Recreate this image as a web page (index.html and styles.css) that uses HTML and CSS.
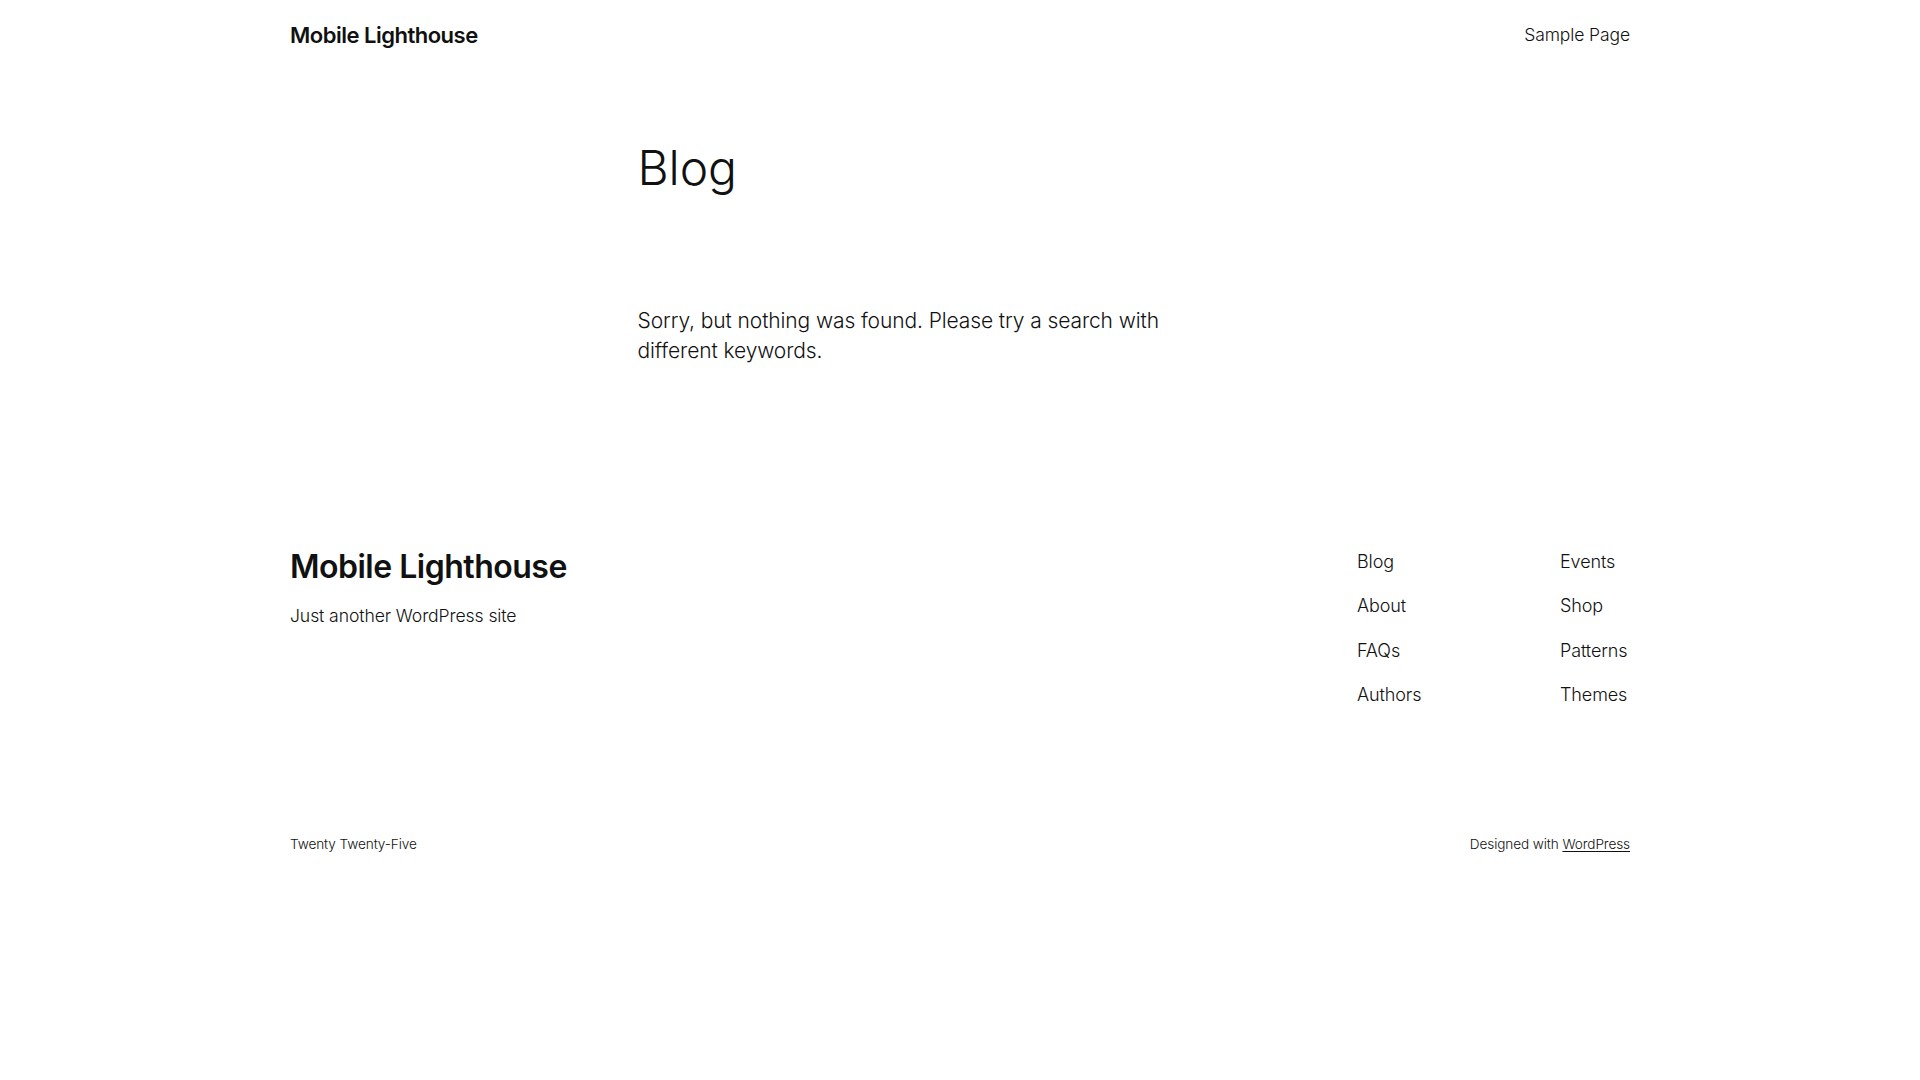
FILE: index.html
```html
<!DOCTYPE html>
<html lang="en">
<head>
<meta charset="utf-8">
<title>Blog – Mobile Lighthouse</title>
<link rel="stylesheet" href="styles.css">
</head>
<body>
<header class="site-header">
  <div class="wide header-row">
    <a class="site-title" href="#">Mobile Lighthouse</a>
    <nav class="header-nav"><a href="#">Sample Page</a></nav>
  </div>
</header>
<main class="main">
  <div class="content">
    <h1 class="page-title">Blog</h1>
    <p class="no-results">Sorry, but nothing was found. Please try a search with different keywords.</p>
  </div>
</main>
<footer class="site-footer">
  <div class="wide footer-top">
    <div class="footer-brand">
      <h2 class="footer-title"><a href="#">Mobile Lighthouse</a></h2>
      <p class="tagline">Just another WordPress site</p>
    </div>
    <div class="footer-navs">
      <nav class="footer-nav">
        <a href="#">Blog</a>
        <a href="#">About</a>
        <a href="#">FAQs</a>
        <a href="#">Authors</a>
      </nav>
      <nav class="footer-nav">
        <a href="#">Events</a>
        <a href="#">Shop</a>
        <a href="#">Patterns</a>
        <a href="#">Themes</a>
      </nav>
    </div>
  </div>
  <div class="wide footer-bottom">
    <p class="credit-left">Twenty Twenty-Five</p>
    <p class="credit-right">Designed with <a href="#">WordPress</a></p>
  </div>
</footer>
</body>
</html>
```
FILE: styles.css
```css
* { box-sizing: border-box; }
html, body { margin: 0; padding: 0; background: #ffffff; }
body {
  font-family: Inter, "Noto Sans", "Liberation Sans", sans-serif;
  font-weight: 300;
  font-size: 22px;
  line-height: 1.4;
  letter-spacing: -0.1px;
  color: #111111;
}
a { color: #111111; text-decoration: none; }
p, h1, h2 { margin: 0; }

.wide { width: 1340px; margin: 0 auto; }

.site-header { height: 70px; }
.header-row {
  height: 100%;
  display: flex;
  align-items: center;
  justify-content: space-between;
}
.site-title {
  font-size: 22px;
  font-weight: 600;
  letter-spacing: -0.5px;
}
.header-nav { padding-bottom: 4px; }
.header-nav a { font-size: 17.5px; font-weight: 300; line-height: 1.2; }

.main { padding-top: 69px; }
.content { width: 645px; margin: 0 auto; }
.page-title {
  font-size: 48px;
  font-weight: 300;
  line-height: 1.2;
  letter-spacing: -0.1px;
}
.no-results {
  margin-top: 109px;
  max-width: 600px;
  font-size: 21px;
  line-height: 30.8px;
}

.site-footer { padding-top: 178px; }
.footer-top {
  display: flex;
  justify-content: space-between;
  align-items: flex-start;
}
.footer-title {
  font-size: 32px;
  font-weight: 600;
  line-height: 1.4;
  letter-spacing: -0.5px;
}
.tagline { font-size: 17.6px; margin-top: 14px; }
.footer-navs {
  display: grid;
  grid-template-columns: 203px 70px;
  padding-top: 4px;
}
.footer-nav {
  display: flex;
  flex-direction: column;
  gap: 19px;
  font-size: 18px;
}
.footer-bottom {
  display: flex;
  justify-content: space-between;
  font-size: 13.6px;
  margin-top: 128px;
}
.credit-right a { text-decoration: underline; text-underline-offset: 2px; }
```
